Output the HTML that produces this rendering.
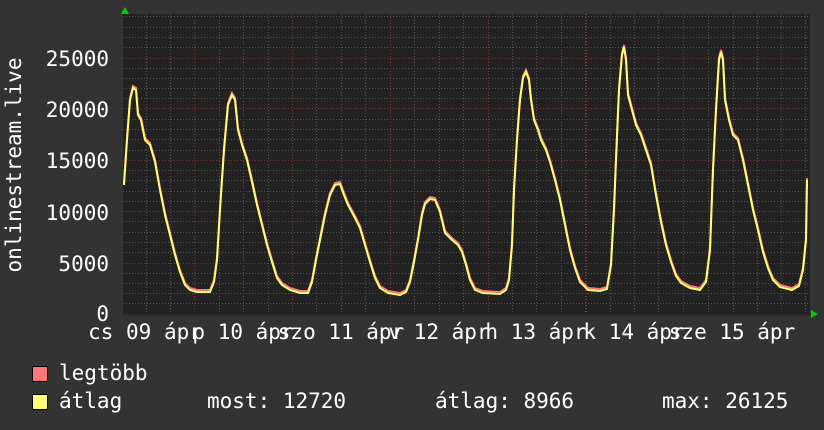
<!DOCTYPE html>
<html><head><meta charset="utf-8"><style>
html,body{margin:0;padding:0;background:#333;}
svg{display:block;}
text{font-family:"DejaVu Sans Mono","Liberation Mono",monospace;font-size:21px;fill:#fff;}
</style></head><body>
<svg width="824" height="430" viewBox="0 0 824 430" xmlns="http://www.w3.org/2000/svg">
<rect width="824" height="430" fill="#333"/>
<rect x="123" y="14" width="687" height="300" fill="#222"/>
<g stroke="#555" stroke-width="1" stroke-dasharray="1,2" fill="none">
<path d="M123 303.5H810M123 293.5H810M123 283.5H810M123 273.5H810M123 252.5H810M123 242.5H810M123 232.5H810M123 221.5H810M123 201.5H810M123 191.5H810M123 180.5H810M123 170.5H810M123 150.5H810M123 139.5H810M123 129.5H810M123 119.5H810M123 98.5H810M123 88.5H810M123 78.5H810M123 68.5H810M123 47.5H810M123 37.5H810M123 27.5H810M123 16.5H810"/>
<path d="M146.5 14V314M170.5 14V314M219.5 14V314M243.5 14V314M268.5 14V314M292.5 14V314M316.5 14V314M341.5 14V314M365.5 14V314M390.5 14V314M414.5 14V314M439.5 14V314M463.5 14V314M512.5 14V314M536.5 14V314M561.5 14V314M585.5 14V314M610.5 14V314M634.5 14V314M658.5 14V314M683.5 14V314M708.5 14V314M733.5 14V314M757.5 14V314M805.5 14V314"/>
</g>
<g stroke="#7a3535" stroke-width="1" stroke-dasharray="1,2" fill="none">
<path d="M123 263.5H810M123 211.5H810M123 160.5H810M123 108.5H810M123 58.5H810"/>
<path d="M194.5 14V314M292.5 14V314M390.5 14V314M488.5 14V314M586.5 14V314M683.5 14V314M781.5 14V314"/>
</g>
<rect x="123" y="314" width="687" height="2" fill="#2a2a2a"/>
<polygon points="121,14 125,7 129,14" fill="#0c0"/>
<polygon points="811,310 818,314 811,318" fill="#0c0"/>
<defs>
<polyline id="c" points="124,185 127,140 130,100 133,88 136,90 138,115 141,120 145,140 150,145 155,162 160,190 165,215 170,235 175,255 180,272 185,285 190,290 197,292 210,292 214,282 217,260 220,210 224,150 228,105 232,95 235,100 238,130 242,145 247,160 252,182 257,205 262,225 267,245 272,262 277,278 282,285 290,290 300,293 308,293 312,282 316,260 320,240 325,215 330,195 335,185 340,184 344,195 348,205 355,218 360,228 365,245 370,262 375,278 380,288 388,293 400,295 406,292 410,282 414,262 418,240 422,215 425,204 430,199 435,200 440,212 445,233 452,240 458,245 462,252 466,265 470,280 475,290 483,293 500,294 506,290 509,280 512,245 514,190 517,140 520,100 523,78 526,72 529,80 531,100 534,120 538,130 541,140 546,150 550,162 555,180 560,200 565,225 570,250 575,268 580,282 588,290 600,291 607,289 611,265 614,210 616,160 619,90 622,55 624,47 626,60 628,95 632,110 636,125 641,135 646,150 651,165 656,195 661,222 666,245 671,262 676,276 681,283 690,288 700,290 706,282 710,250 713,170 716,110 719,60 721,52 723,60 725,100 729,120 733,135 738,140 743,160 748,185 753,210 758,230 763,252 768,268 773,280 780,287 792,290 799,286 803,270 806,240 807,180"/>
</defs>
<use href="#c" transform="translate(0,-2)" fill="none" stroke="#f77" stroke-width="2"/>
<use href="#c" fill="none" stroke="#ff7" stroke-width="2"/>
<g text-anchor="end">
<text x="109" y="66">25000</text>
<text x="109" y="117">20000</text>
<text x="109" y="168">15000</text>
<text x="109" y="220">10000</text>
<text x="109" y="271">5000</text>
<text x="109" y="321">0</text>
</g>
<text transform="translate(21,165) rotate(-90)" text-anchor="middle">onlinestream.live</text>
<g text-anchor="middle">
<text x="145" y="339">cs 09 ápr</text>
<text x="243" y="339">p 10 ápr</text>
<text x="341" y="339">szo 11 ápr</text>
<text x="439" y="339">v 12 ápr</text>
<text x="536" y="339">h 13 ápr</text>
<text x="634" y="339">k 14 ápr</text>
<text x="732" y="339">sze 15 ápr</text>
</g>
<rect x="32.5" y="366.5" width="15" height="15" fill="#f77" stroke="#000"/>
<rect x="32.5" y="394.5" width="15" height="15" fill="#ff7" stroke="#000"/>
<text x="59" y="380">legtöbb</text>
<text x="59" y="408">átlag</text>
<text x="207" y="408">most: 12720</text>
<text x="435" y="408">átlag: 8966</text>
<text x="662" y="408">max: 26125</text>
</svg>
</body></html>
